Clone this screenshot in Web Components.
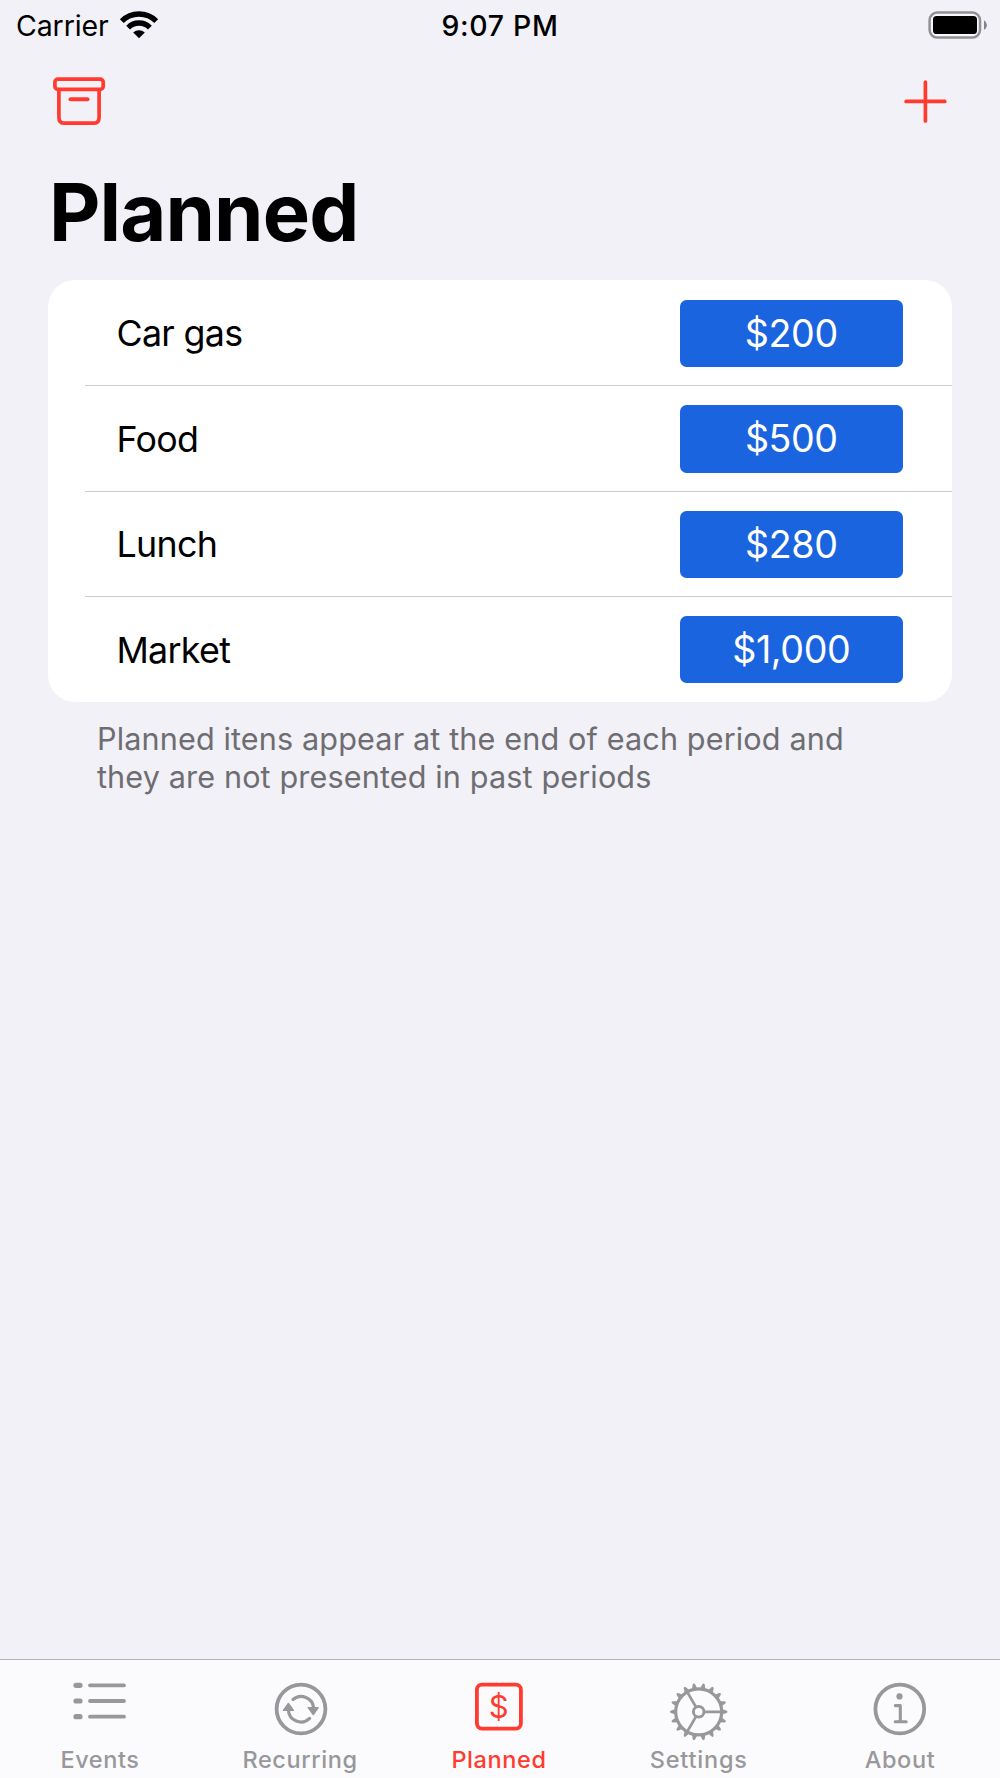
<!DOCTYPE html>
<html lang="en">
<head>
<meta charset="utf-8">
<title>Planned</title>
<style>
    body {
        margin: 0;
        background: #f2f1f7;
        font-family: Inter, "Liberation Sans", sans-serif;
        color: #000000;
    }
</style>
</head>
<body>
<app-screen>
    <status-bar slot="header" carrier="Carrier" time="9:07 PM"></status-bar>
    <nav-bar slot="header">Planned</nav-bar>
    <item-list>
        <list-item amount="$200">Car gas</list-item>
        <list-item amount="$500">Food</list-item>
        <list-item amount="$280">Lunch</list-item>
        <list-item amount="$1,000">Market</list-item>
        <span slot="footer">Planned itens appear at the end of each period and they are not presented in past periods</span>
    </item-list>
    <tab-bar slot="tabs">
        <tab-item icon="list">Events</tab-item>
        <tab-item icon="recurring">Recurring</tab-item>
        <tab-item icon="dollar" active>Planned</tab-item>
        <tab-item icon="gear">Settings</tab-item>
        <tab-item icon="info">About</tab-item>
    </tab-bar>
</app-screen>

<script>
const range = (n) => Array.from({ length: n }, (_, i) => i);

const tooth = (i) => `<path d="M52.2 28.2L56.3 29.5Q58.8 30.8 56.3 32.1L52.2 33.4Z" transform="rotate(${i * 20} 28.7 30.8)" fill="currentColor" stroke="none"/>`;
const spoke = (i) => `<path d="M34.5 30.8H51.5" transform="rotate(${i * 120} 28.7 30.8)" stroke-width="2.7"/>`;

const icons = {
    list: `
        <path d="M6 4.3h4M6 20h4M6 35.7h4" stroke-width="5.2"/>
        <path d="M20 4.3h34M20 20h34M20 35.7h34" stroke-width="3.8"/>`,
    recurring: `
        <circle cx="31" cy="28" r="24.4" stroke-width="3.8"/>
        <path d="M23 18.5A12.5 12.5 0 0 1 43.6 27M39.6 37.4A12.5 12.5 0 0 1 18.4 29" stroke-width="3.2"/>
        <path d="M38.2 26.6h10l-4.9 7zM13.4 29.4h10l-5-7z" fill="currentColor" stroke-width="1.4"/>`,
    dollar: `
        <rect x="6.9" y="3.6" width="44" height="44" rx="5" stroke-width="3.8"/>
        <text x="28.7" y="36.8" text-anchor="middle" font-size="31" fill="currentColor" stroke="none">$</text>`,
    gear: `
        <circle cx="28.7" cy="30.8" r="23" stroke-width="3.2"/>
        <circle cx="28.7" cy="30.8" r="5.3" stroke-width="2.9"/>
        ${range(18).map(tooth).join("")}
        ${range(3).map(spoke).join("")}`,
    info: `
        <circle cx="29.8" cy="28" r="24.4" stroke-width="3.8"/>
        <circle cx="29.5" cy="15.4" r="3.1" fill="currentColor" stroke="none"/>
        <path d="M25.3 24.6h5v16M25.2 40.7h11" stroke-width="3.1"/>`,
};

class AppScreen extends HTMLElement {
    constructor() {
        super();
        this.attachShadow({ mode: "open" });
    }

    connectedCallback() {
        this.shadowRoot.innerHTML = `
        <style>
            :host {
                display: flex;
                flex-direction: column;
                width: 1000px;
                height: 1778px;
                overflow: hidden;
            }
            main { flex: 1; }
        </style>
        <slot name="header"></slot>
        <main><slot></slot></main>
        <slot name="tabs"></slot>
        `;
    }
}

class StatusBar extends HTMLElement {
    constructor() {
        super();
        this.attachShadow({ mode: "open" });
    }

    connectedCallback() {
        this.shadowRoot.innerHTML = `
        <style>
            :host {
                display: grid;
                grid-template-columns: 1fr auto 1fr;
                align-items: center;
                box-sizing: border-box;
                height: 50px;
                padding: 0 12px;
                font-size: 28.5px;
                line-height: 50px;
            }
            .carrier {
                display: flex;
                align-items: center;
                gap: 10.5px;
                padding-left: 4px;
                letter-spacing: -0.1px;
            }
            .time {
                font-weight: 500;
                font-size: 28.4px;
                letter-spacing: 0.7px;
            }
            span { padding-top: 1px; }
            .battery { justify-self: end; }
            svg { display: block; }
        </style>
        <div class="carrier">
            <span>${this.getAttribute("carrier")}</span>
            <svg width="40" height="50" viewBox="0 0 40 50" fill="none" stroke="#000000" stroke-width="5.4">
                <path d="M2.8 20.2A24.3 24.3 0 0 1 37.2 20.2M9.1 26.6A15.3 15.3 0 0 1 30.9 26.6"/>
                <path d="M20 37.2L14.2 31.4A8.6 8.6 0 0 1 25.8 31.4Z" fill="#000000" stroke="none"/>
            </svg>
        </div>
        <span class="time">${this.getAttribute("time")}</span>
        <svg class="battery" width="60" height="50" viewBox="0 0 60 50">
            <rect x="1.6" y="11.6" width="50.4" height="25" rx="7.5" fill="#f8f8fb" stroke="#919195" stroke-width="2.5"/>
            <rect x="5" y="15" width="44" height="18" rx="3.6"/>
            <path d="M56 19.2Q59 21 59 24.1T56 29Z" fill="#858589"/>
        </svg>
        `;
    }
}

class NavBar extends HTMLElement {
    constructor() {
        super();
        this.attachShadow({ mode: "open" });
    }

    connectedCallback() {
        this.shadowRoot.innerHTML = `
        <style>
            :host { display: block; height: 230px; }
            .actions {
                display: flex;
                justify-content: space-between;
                padding: 20px 50px 0 50px;
                color: #ff3b30;
            }
            svg {
                display: block;
                fill: none;
                stroke: currentColor;
                stroke-width: 3.7;
                stroke-linecap: round;
                stroke-linejoin: round;
            }
            h1 {
                margin: 0;
                padding: 32px 0 0 49px;
                font-size: 79.5px;
                font-weight: 700;
                line-height: 100px;
                letter-spacing: -0.9px;
            }
        </style>
        <div class="actions">
            <svg width="60" height="60" viewBox="0 0 60 60">
                <rect x="4.9" y="9.1" width="48.3" height="10.3" rx="3"/>
                <path d="M8.9 19.5V47.4Q8.9 53.2 14.7 53.2H43.3Q49.1 53.2 49.1 47.4V19.5"/>
                <path d="M20.5 29.3h17" stroke-width="4"/>
            </svg>
            <svg width="50" height="60" viewBox="0 0 50 60">
                <path d="M6.1 31.4h38.7M25.4 12v39"/>
            </svg>
        </div>
        <h1><slot></slot></h1>
        `;
    }
}

class ItemList extends HTMLElement {
    constructor() {
        super();
        this.attachShadow({ mode: "open" });
    }

    connectedCallback() {
        this.shadowRoot.innerHTML = `
        <style>
            :host { display: block; padding: 0 48.4px; }
            .card {
                box-sizing: border-box;
                height: 421.6px;
                padding-top: 0.8px;
                background: #ffffff;
                border-radius: 27px;
                overflow: hidden;
            }
            .footer {
                padding: 18px 60px 0 48.6px;
                font-size: 30.6px;
                line-height: 38.7px;
                letter-spacing: 0.13px;
                color: #6d6d72;
            }
        </style>
        <div class="card"><slot></slot></div>
        <div class="footer"><slot name="footer"></slot></div>
        `;
    }
}

class ListItem extends HTMLElement {
    constructor() {
        super();
        this.attachShadow({ mode: "open" });
    }

    connectedCallback() {
        this.shadowRoot.innerHTML = `
        <style>
            :host {
                display: block;
                height: 105.4px;
                padding-left: 36.6px;
            }
            .row {
                display: flex;
                align-items: center;
                justify-content: space-between;
                box-sizing: border-box;
                height: 100%;
                padding: 1px 48.6px 0 31.5px;
                border-bottom: 1px solid #cbcbcd;
                font-size: 35.8px;
                letter-spacing: -0.7px;
            }
            :host(:last-of-type) .row { border-bottom-color: transparent; }
            .amount {
                width: 223.5px;
                height: 67.5px;
                border-radius: 6.5px;
                background: #1b64df;
                color: #ffffff;
                font-size: 37.6px;
                line-height: 68px;
                letter-spacing: -0.4px;
                text-align: center;
            }
        </style>
        <div class="row">
            <slot></slot>
            <div class="amount">${this.getAttribute("amount")}</div>
        </div>
        `;
    }
}

class TabBar extends HTMLElement {
    constructor() {
        super();
        this.attachShadow({ mode: "open" });
    }

    connectedCallback() {
        this.shadowRoot.innerHTML = `
        <style>
            :host {
                display: grid;
                grid-template-columns: repeat(5, 1fr);
                box-sizing: border-box;
                height: 119px;
                border-top: 1px solid #b4b4b7;
                background: #fbfbfd;
            }
        </style>
        <slot></slot>
        `;
    }
}

class TabItem extends HTMLElement {
    constructor() {
        super();
        this.attachShadow({ mode: "open" });
    }

    connectedCallback() {
        const icon = this.getAttribute("icon");

        this.shadowRoot.innerHTML = `
        <style>
            :host {
                display: flex;
                flex-direction: column;
                align-items: center;
                padding-top: 21px;
                color: #98989c;
                font-size: 23.5px;
                font-weight: 500;
                line-height: 38px;
                letter-spacing: 0.6px;
            }
            :host([active]) { color: #ff3b30; }
            :host([icon="dollar"]) span { margin-right: 2px; }
            :host([icon="gear"]) span {
                margin-right: 2.5px;
                letter-spacing: 0.8px;
            }
            svg {
                display: block;
                fill: none;
                stroke: currentColor;
                stroke-linecap: round;
                stroke-linejoin: round;
                letter-spacing: 0;
                font-weight: 400;
            }
        </style>
        <svg width="60" height="60" viewBox="0 0 60 60">${icons[icon]}</svg>
        <span><slot></slot></span>
        `;
    }
}

customElements.define("app-screen", AppScreen);
customElements.define("status-bar", StatusBar);
customElements.define("nav-bar", NavBar);
customElements.define("item-list", ItemList);
customElements.define("list-item", ListItem);
customElements.define("tab-bar", TabBar);
customElements.define("tab-item", TabItem);
</script>
</body>
</html>
